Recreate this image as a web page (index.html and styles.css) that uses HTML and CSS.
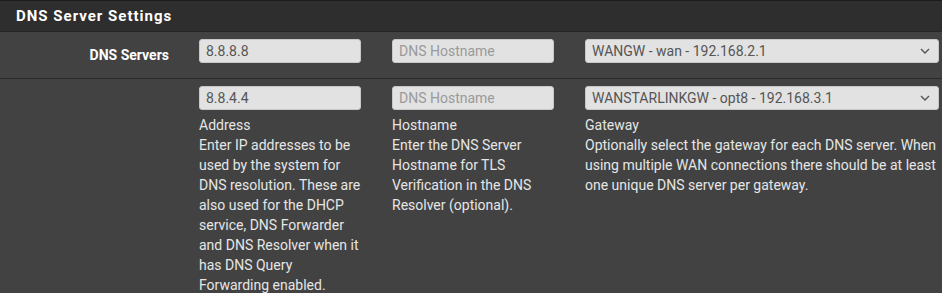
FILE: index.html
```html
<!DOCTYPE html>
<html lang="en">
<head>
  <meta charset="UTF-8">
  <title>DNS Server Settings</title>
  <link rel="stylesheet" href="styles.css">
</head>
<body>
  <div class="panel">
    <div class="panel-heading">DNS Server Settings</div>

    <!-- first DNS server row -->
    <div class="form-row">
      <div class="row-label">DNS Servers</div>
      <div class="field"><input type="text" class="form-control" value="8.8.8.8"></div>
      <div class="field"><input type="text" class="form-control" placeholder="DNS Hostname"></div>
      <div class="field wide">
        <div class="select">
          <span>WANGW - wan - 192.168.2.1</span>
          <svg class="chevron" width="10" height="6" viewBox="0 0 10 6"><path d="M1 1l4 4 4-4" fill="none" stroke="#555" stroke-width="1.4"/></svg>
        </div>
      </div>
    </div>

    <!-- second DNS server row with help -->
    <div class="form-row last">
      <div class="row-label"></div>
      <div class="field">
        <input type="text" class="form-control" value="8.8.4.4">
        <div class="help">Address<br>Enter IP addresses to be used by the system for DNS resolution. These are also used for the DHCP service, DNS Forwarder and DNS Resolver when it has DNS Query Forwarding enabled.</div>
      </div>
      <div class="field">
        <input type="text" class="form-control" placeholder="DNS Hostname">
        <div class="help">Hostname<br>Enter the DNS Server Hostname for TLS Verification in the DNS Resolver (optional).</div>
      </div>
      <div class="field wide">
        <div class="select">
          <span>WANSTARLINKGW - opt8 - 192.168.3.1</span>
          <svg class="chevron" width="10" height="6" viewBox="0 0 10 6"><path d="M1 1l4 4 4-4" fill="none" stroke="#555" stroke-width="1.4"/></svg>
        </div>
        <div class="help">Gateway<br>Optionally select the gateway for each DNS server. When using multiple WAN connections there should be at least one unique DNS server per gateway.</div>
      </div>
    </div>
  </div>
</body>
</html>
```

FILE: styles.css
```css
body {
  margin: 0;
  font-family: Roboto, "Liberation Sans", sans-serif;
  background-color: #424242;
  overflow: hidden;
}
.panel {
  border-top: 1px solid #1c1c1c;
  background-color: #424242;
}
.panel-heading {
  height: 30px;
  line-height: 30px;
  padding-left: 16px;
  background-color: #2e2e2e;
  border-bottom: 1px solid #262626;
  color: #fff;
  font-size: 15px;
  font-weight: bold;
  letter-spacing: 1px;
}
.form-row {
  display: grid;
  grid-template-columns: 184px 193px 193px 1fr;
  align-items: start;
  padding: 7px 0 15px;
  border-bottom: 1px solid #2a2a2a;
}
.form-row.last {
  border-bottom: none;
  padding-bottom: 0;
}
.row-label {
  box-sizing: border-box;
  height: 24px;
  padding: 6px 15px 0 0;
  line-height: 20px;
  text-align: right;
  color: #fff;
  font-size: 14px;
  font-weight: bold;
}
.field {
  padding: 0 16px 0 15px;
}
.field.wide {
  padding-right: 3px;
}
.form-control {
  box-sizing: border-box;
  display: block;
  width: 100%;
  height: 24px;
  padding: 0 6px;
  border: 1px solid #c8c8c8;
  border-radius: 3px;
  background-color: #e2e2e2;
  color: #555;
  font-family: inherit;
  font-size: 14px;
}
.form-control::placeholder {
  color: #9a9a9a;
}
.select {
  box-sizing: border-box;
  display: flex;
  align-items: center;
  justify-content: space-between;
  height: 24px;
  padding: 0 8px 0 6px;
  border: 1px solid #c8c8c8;
  border-radius: 3px;
  background-color: #e2e2e2;
  color: #555;
  font-size: 14px;
}
.chevron {
  flex-shrink: 0;
}
.help {
  margin-top: 5px;
  color: #e6e6e6;
  font-size: 14px;
  line-height: 20px;
}
```
